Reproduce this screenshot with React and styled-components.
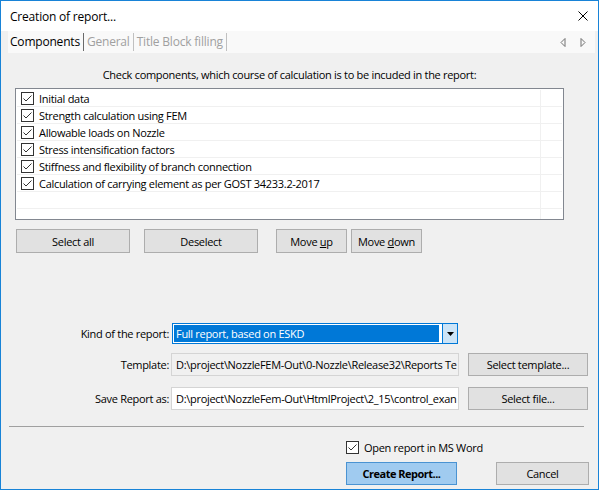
import React from "react"
import styled, { createGlobalStyle } from "styled-components"

const GlobalStyle = createGlobalStyle`
  html, body {
    margin: 0;
    padding: 0;
    background: #f0f0f0;
  }
  body {
    font-family: "Open Sans", "Noto Sans", sans-serif;
    font-size: 11px;
    letter-spacing: -0.3px;
    color: #000;
  }
  * {
    box-sizing: border-box;
  }
`

const Window = styled.div`
  width: 599px;
  height: 490px;
  border: 1px solid #1883d7;
  background: #f0f0f0;
  display: flex;
  flex-direction: column;
  overflow: hidden;
`

const TitleBar = styled.div`
  height: 30px;
  flex: none;
  background: #fff;
  display: flex;
  align-items: center;
  justify-content: space-between;
  padding: 0 10px 0 9px;
  font-size: 12px;
  letter-spacing: -0.2px;
`

const CloseButton = styled.span`
  display: flex;
  width: 10px;
  height: 10px;
`

const TabStrip = styled.div`
  height: 22px;
  flex: none;
  margin: 0 3px 0 7px;
  background: #f9f9f9;
  display: flex;
  align-items: center;
  padding-left: 2px;
  font-size: 12px;
  letter-spacing: -0.2px;
`

const Tab = styled.span`
  color: ${(p) => (p.active ? "#000" : "#a0a0a0")};
  padding: 0 3px 0 ${(p) => (p.first ? "0" : "3px")};
  height: 18px;
  line-height: 18px;
  border-right: 1px solid ${(p) => (p.active ? "#6a6a6a" : "#c0c0c0")};
`

const TabArrows = styled.div`
  margin-left: auto;
  display: flex;
  gap: 14px;
  padding-right: 9px;
`

const Content = styled.div`
  display: flex;
  flex-direction: column;
  padding-left: 14px;
`

const Hint = styled.div`
  width: 549px;
  margin-top: 14px;
  line-height: 16px;
  height: 16px;
  text-align: center;
`

const ListBox = styled.div`
  width: 549px;
  height: 132px;
  margin-top: 5px;
  border: 1px solid #828790;
  background: #fff;
  padding: 1px;
  overflow: hidden;
`

const Row = styled.div`
  display: grid;
  grid-template-columns: 524px 1fr;
  height: 17px;
  border-bottom: 1px solid #f0f0f0;
`

const RowCell = styled.div`
  display: flex;
  align-items: center;
  gap: 5px;
  padding: 1px 0 0 4px;
  border-right: 1px solid #f0f0f0;
  white-space: nowrap;
`

const Box = styled.span`
  display: inline-flex;
  flex: none;
  width: 13px;
  height: 13px;
  border: 1px solid #333;
  background: #fff;
`

const ButtonRow = styled.div`
  display: flex;
  margin-top: 9px;
  padding-left: 1px;
`

const Button = styled.button`
  font: inherit;
  letter-spacing: inherit;
  color: #000;
  height: ${(p) => p.h || 24}px;
  width: ${(p) => p.w}px;
  margin-left: ${(p) => p.ml || 0}px;
  padding: 0;
  background: ${(p) => (p.primary ? "#a0cbf0" : "#e1e1e1")};
  border: 1px solid ${(p) => (p.primary ? "#4a93d2" : "#adadad")};
  font-weight: ${(p) => (p.primary ? 700 : 400)};
  letter-spacing: ${(p) => (p.primary ? "-0.5px" : "inherit")};
  text-align: center;
  flex: none;
`

const Form = styled.div`
  display: grid;
  grid-template-columns: 168px 289px 130px;
  margin-top: 70px;
`

const Label = styled.div`
  grid-column: 1;
  display: flex;
  align-items: center;
  justify-content: flex-end;
  height: ${(p) => p.h}px;
  margin-top: ${(p) => p.mt || 0}px;
`

const Combo = styled.div`
  grid-column: 2;
  margin-left: 3px;
  width: 286px;
  height: 21px;
  border: 1px solid #0078d7;
  background: #fff;
  padding: 1px;
  display: flex;
`

const ComboValue = styled.div`
  flex: 1;
  background: #0078d7;
  color: #fff;
  padding-left: 2px;
  display: flex;
  align-items: center;
  white-space: nowrap;
  overflow: hidden;
`

const ComboButton = styled.div`
  width: 15px;
  margin: -1px -1px -1px 3px;
  background: #cce4f7;
  border-left: 1px solid #0078d7;
  display: flex;
  align-items: center;
  justify-content: center;
`

const TextBox = styled.div`
  grid-column: 2;
  margin-left: 2px;
  width: 288px;
  height: 23px;
  margin-top: ${(p) => p.mt}px;
  border: 1px solid #d4d4d4;
  background: ${(p) => (p.readOnly ? "#f0f0f0" : "#fff")};
  padding-left: 4px;
  display: flex;
  align-items: center;
  white-space: nowrap;
  overflow: hidden;
`

const SideButton = styled(Button)`
  grid-column: 3;
  margin-left: 10px;
  margin-top: ${(p) => p.mt}px;
  width: 120px;
  height: 23px;
`

const Separator = styled.div`
  height: 1px;
  margin: 16px 14px 0 8px;
  background: #a0a0a0;
`

const Footer = styled.div`
  display: flex;
  justify-content: flex-end;
  padding-right: 9px;
`

const FooterColumn = styled.div`
  width: 243px;
  display: flex;
  flex-direction: column;
`

const CheckLine = styled.label`
  display: flex;
  align-items: center;
  gap: 5px;
  margin-top: 14px;
  height: 13px;
`

const FooterButtons = styled.div`
  display: flex;
  justify-content: space-between;
  margin-top: 8px;
`

const Check = () => (
  <Box>
    <svg width="11" height="11" viewBox="0 0 11 11">
      <path d="M1.5 5.5 L4 8 L9.5 2.5" fill="none" stroke="#333" strokeWidth="1" />
    </svg>
  </Box>
)

const components = [
  "Initial data",
  "Strength calculation using FEM",
  "Allowable loads on Nozzle",
  "Stress intensification factors",
  "Stiffness and flexibility of branch connection",
  "Calculation of carrying element as per GOST 34233.2-2017",
  "",
  "",
]

export default function App() {
  return (
    <>
      <GlobalStyle />
      <Window>
        <TitleBar>
          <span>Creation of report...</span>
          <CloseButton>
            <svg width="10" height="10" viewBox="0 0 10 10">
              <path d="M0.5 0.5 L9.5 9.5 M9.5 0.5 L0.5 9.5" stroke="#000" strokeWidth="1" />
            </svg>
          </CloseButton>
        </TitleBar>
        <TabStrip>
          <Tab active first>Components</Tab>
          <Tab>General</Tab>
          <Tab>Title Block filling</Tab>
          <TabArrows>
            <svg width="6" height="9" viewBox="0 0 6 9">
              <path d="M5 0.5 L1 4.5 L5 8.5 Z" fill="none" stroke="#707070" strokeWidth="1" />
            </svg>
            <svg width="6" height="9" viewBox="0 0 6 9">
              <path d="M1 0.5 L5 4.5 L1 8.5 Z" fill="none" stroke="#707070" strokeWidth="1" />
            </svg>
          </TabArrows>
        </TabStrip>
        <Content>
          <Hint>Check components, which course of calculation is to be incuded in the report:</Hint>
          <ListBox>
            {components.map((c, i) => (
              <Row key={i}>
                <RowCell>
                  {c && <Check />}
                  {c && <span>{c}</span>}
                </RowCell>
                <div />
              </Row>
            ))}
          </ListBox>
          <ButtonRow>
            <Button w={114}>Select all</Button>
            <Button w={114} ml={14}>Deselect</Button>
            <Button w={71} ml={18}>Move <u>u</u>p</Button>
            <Button w={71} ml={4}>Move <u>d</u>own</Button>
          </ButtonRow>
        </Content>
        <Form>
          <Label h={21}>Kind of the report:</Label>
          <Combo>
            <ComboValue>Full report, based on ESKD</ComboValue>
            <ComboButton>
              <svg width="7" height="4" viewBox="0 0 7 4">
                <path d="M0 0 L7 0 L3.5 4 Z" fill="#000" />
              </svg>
            </ComboButton>
          </Combo>
          <div />
          <Label h={23} mt={9}>Template:</Label>
          <TextBox readOnly mt={9}>D:\project\NozzleFEM-Out\0-Nozzle\Release32\Reports Te</TextBox>
          <SideButton mt={9}>Select template...</SideButton>
          <Label h={23} mt={11}>Save Report as:</Label>
          <TextBox mt={11}>D:\project\NozzleFem-Out\HtmlProject\2_15\control_exan</TextBox>
          <SideButton mt={11}>Select file...</SideButton>
        </Form>
        <Separator />
        <Footer>
          <FooterColumn>
            <CheckLine>
              <Check />
              <span>Open report in MS Word</span>
            </CheckLine>
            <FooterButtons>
              <Button primary w={111} h={23}>Create Report...</Button>
              <Button w={93} h={23}>Cancel</Button>
            </FooterButtons>
          </FooterColumn>
        </Footer>
      </Window>
    </>
  )
}
